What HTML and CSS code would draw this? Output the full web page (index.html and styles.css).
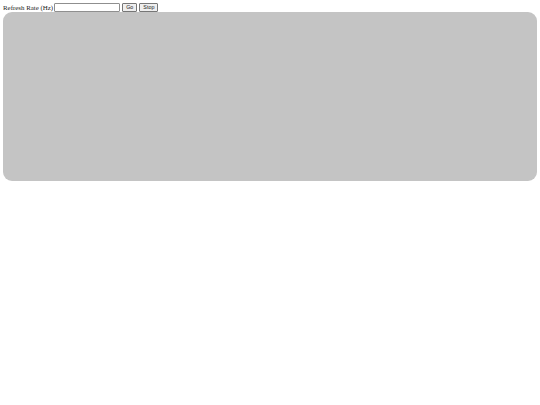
FILE: index.html
```
<!DOCTYPE html>
<html>
<head>
<meta charset="utf-8">
<link rel="stylesheet" href="styles.css">
</head>
<body>
<div class="controls">
<label class="label">Refresh Rate (Hz)</label>
<input class="rate" type="text">
<button class="btn">Go</button>
<button class="btn">Stop</button>
</div>
<div class="canvas"></div>
</body>
</html>
```
FILE: styles.css
```
body {
  margin: 3px;
  font-family: "Liberation Serif", serif;
  font-size: 6.9px;
  color: #222;
}
.controls {
  display: flex;
  align-items: center;
  height: 9px;
  gap: 1px;
}
.rate {
  box-sizing: border-box;
  width: 66px;
  height: 9px;
  margin: 0;
  padding: 0;
  border: 1px solid #8f8f8f;
  border-radius: 1px;
  background: #fff;
}
.btn {
  box-sizing: border-box;
  height: 9px;
  margin: 0 0 0 1px;
  padding: 0 3px;
  font-family: "Liberation Sans", sans-serif;
  font-size: 5.4px;
  line-height: 7px;
  color: #222;
  background: #efefef;
  border: 1px solid #767676;
  border-radius: 1px;
}
.canvas {
  height: 169px;
  background: #c4c4c4;
  border-radius: 9px;
}
```
